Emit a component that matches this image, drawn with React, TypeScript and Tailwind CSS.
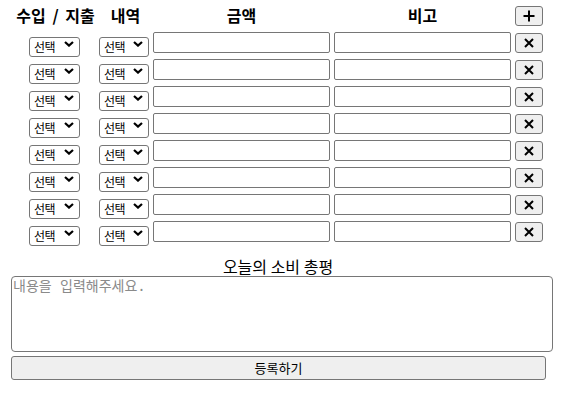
import { useState } from "react";

const KR = "font-['Noto_Sans_CJK_KR',sans-serif]";

function Chevron() {
  return (
    <svg width="10" height="6" viewBox="0 0 10 6" className="pointer-events-none absolute right-[6px] top-[8px]">
      <path d="M1 1 L5 4.6 L9 1" fill="none" stroke="#000" strokeWidth="2.2" />
    </svg>
  );
}

function Picker({ w }: { w: string }) {
  return (
    <div className={`relative ${w} h-[20px] shrink-0`}>
      <select
        className={`${KR} h-full w-full appearance-none rounded-[3px] border border-[#767676] bg-white py-0 pl-[4px] text-[12px] leading-[18px] tracking-[-0.5px] text-black`}
      >
        <option>선택</option>
      </select>
      <Chevron />
    </div>
  );
}

function IconBtn({ kind }: { kind: "plus" | "x" }) {
  return (
    <button className="flex h-[20px] w-[28px] shrink-0 items-center justify-center rounded-[3px] border border-[#767676] bg-[#efefef]">
      {kind === "plus" ? (
        <svg width="12" height="12" viewBox="0 0 12 12">
          <path d="M6 0.5 V11.5 M0.5 6 H11.5" stroke="#000" strokeWidth="2" />
        </svg>
      ) : (
        <svg width="10" height="10" viewBox="0 0 10 10">
          <path d="M1 1 L9 9 M9 1 L1 9" stroke="#000" strokeWidth="2" />
        </svg>
      )}
    </button>
  );
}

function Row({ children }: { children: React.ReactNode }) {
  return <div className="flex h-[25px] items-center">{children}</div>;
}

export default function App() {
  const [rows] = useState(Array.from({ length: 8 }, (_, i) => i));
  const th = `${KR} text-[16px] font-bold leading-[25px] text-black text-center`;
  const field = "h-[21px] w-[177px] shrink-0 rounded-[2px] border border-[#767676] bg-white";

  return (
    <div className={`${KR} w-[569px] h-[401px] bg-white pt-[3px] pl-[11px]`}>
      <div className="flex flex-col gap-[2px]">
        <Row>
          <div className={`${th} w-[86px] pl-[3px] [word-spacing:3px]`}>수입 / 지출</div>
          <div className={`${th} ml-[2px] w-[50px] pl-[3px]`}>내역</div>
          <div className={`${th} ml-[4px] w-[177px]`}>금액</div>
          <div className={`${th} ml-[4px] w-[177px]`}>비고</div>
          <div className="ml-[4px]">
            <IconBtn kind="plus" />
          </div>
        </Row>

        {rows.map((r) => (
          <Row key={r}>
            <div className="w-[86px] pl-[18px]">
              <Picker w="w-[51px]" />
            </div>
            <div className="ml-[2px] w-[50px]">
              <Picker w="w-[50px]" />
            </div>
            <input className={`ml-[4px] ${field}`} />
            <input className={`ml-[4px] ${field}`} />
            <div className="ml-[4px]">
              <IconBtn kind="x" />
            </div>
          </Row>
        ))}
      </div>

      <div className="mt-[12px] w-[534px] text-center text-[16px] leading-[20px] text-black">오늘의 소비 총평</div>
      <textarea
        placeholder="내용을 입력해주세요."
        className="block h-[76px] w-[542px] resize-none rounded-[4px] border border-[#767676] bg-white px-[1px] py-0 font-['DejaVu_Sans_Mono','Noto_Sans_CJK_KR',monospace] text-[14px] leading-[18px] placeholder:text-[#8a8a8a]"
      />
      <button className="mt-[4px] block h-[24px] w-[535px] rounded-[3px] border border-[#767676] bg-[#efefef] text-[13px] leading-[20px] text-black">
        등록하기
      </button>
    </div>
  );
}
